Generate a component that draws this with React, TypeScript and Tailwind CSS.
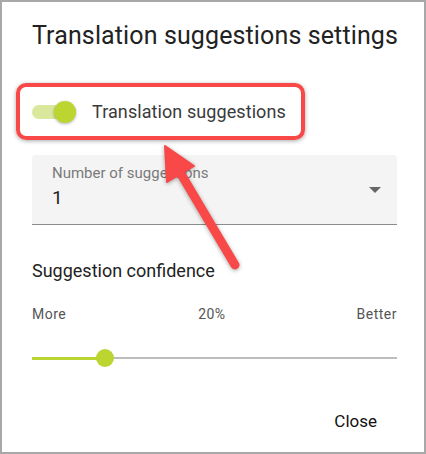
import React from "react";

export default function App() {
  return (
    <div
      className="relative w-[426px] h-[454px] border-2 border-[#a8a8a8] bg-white overflow-hidden"
      style={{ fontFamily: "Roboto, 'Liberation Sans', sans-serif" }}
    >
      <div className="pl-[30px] pr-[27px]">
        <h1 className="pt-[18px] text-[25px] leading-[32px] font-normal tracking-[0.12px] text-[#222] whitespace-nowrap">
          Translation suggestions settings
        </h1>

        {/* toggle row */}
        <div className="mt-[48px] flex items-center h-[24px]">
          <div className="relative w-[46px] h-[24px]">
            <div className="absolute left-0 top-[5px] w-[38px] h-[14px] rounded-full bg-[#d9e89c]" />
            <div className="absolute left-[22px] top-[1px] w-[22px] h-[22px] rounded-full bg-[#bcd530] shadow-[0_1px_3px_rgba(0,0,0,0.3)]" />
          </div>
          <span className="ml-[14px] text-[18px] leading-[24px] tracking-[0.08px] text-[#3a3a3a] whitespace-nowrap">
            Translation suggestions
          </span>
        </div>

        {/* select */}
        <div className="mt-[31px] h-[70px] rounded-t-[4px] bg-[#f4f4f4] border-b border-[#8c8c8c] flex items-start justify-between pl-[20px] pr-[16px]">
          <div className="pt-[9px]">
            <div className="text-[15px] leading-[18px] text-[#7a7a7a]">Number of suggestions</div>
            <div className="mt-[4px] text-[19px] leading-[24px] text-[#222]">1</div>
          </div>
          <div className="self-center w-0 h-0 border-l-[6.5px] border-r-[6.5px] border-t-[6px] border-l-transparent border-r-transparent border-t-[#666]" />
        </div>

        <div className="mt-[34px] text-[18px] leading-[24px] text-[#222]">Suggestion confidence</div>

        <div className="mt-[21px] flex justify-between text-[14px] leading-[20px] tracking-[0.5px] text-[#555]">
          <span>More</span>
          <span className="ml-[1px]">20%</span>
          <span>Better</span>
        </div>

        {/* slider */}
        <div className="mt-[24px] relative h-[20px] flex items-center">
          <div className="w-full h-[2px] bg-[#bdbdbd]" />
          <div className="absolute left-0 top-[8.5px] w-[73px] h-[3px] bg-[#bcd530]" />
          <div className="absolute left-[64px] top-[1px] w-[18px] h-[18px] rounded-full bg-[#bcd530]" />
        </div>

        <div className="mt-[41px] flex justify-end">
          <span className="mr-[20px] text-[17px] leading-[24px] font-normal text-[#111]">Close</span>
        </div>
      </div>

      {/* annotation box */}
      <div className="absolute left-[14px] top-[81px] w-[289px] h-[57px] border-4 border-[#f84848] rounded-[10px] shadow-[0_1px_4px_rgba(0,0,0,0.35)] pointer-events-none" />

      {/* annotation arrow */}
      <svg
        className="absolute left-[-2px] top-[-2px] pointer-events-none"
        width="426"
        height="454"
        viewBox="0 0 426 454"
        style={{ filter: "drop-shadow(0 1px 2px rgba(0,0,0,0.35))" }}
      >
        <line x1="181" y1="174" x2="235" y2="265" stroke="#f84848" strokeWidth="9" strokeLinecap="round" />
        <polygon points="165,146 194,166 167,182" fill="#f84848" strokeLinejoin="round" stroke="#f84848" strokeWidth="2" />
      </svg>
    </div>
  );
}
